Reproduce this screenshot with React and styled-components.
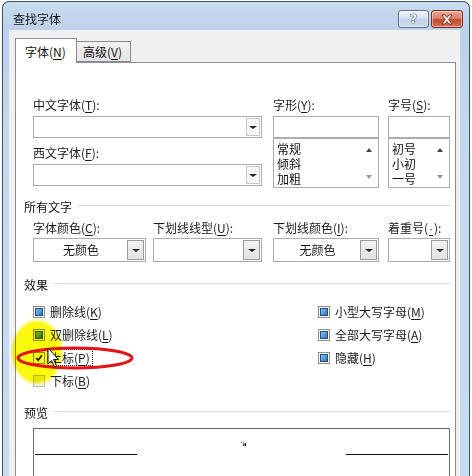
import React from 'react'
import styled, { createGlobalStyle } from 'styled-components'

const Global = createGlobalStyle`
  html, body {
    margin: 0;
    padding: 0;
    background: #fff;
  }
  body {
    font-family: "Noto Sans CJK SC", "Microsoft YaHei", sans-serif;
    font-size: 12px;
    color: #1b1b1b;
  }
  u {
    text-decoration-thickness: 1px;
    text-underline-offset: 2px;
  }
`;

const Screen = styled.div`
    position: relative;
    width: 472px;
    height: 476px;
    overflow: hidden;
    background: #fff;
    padding: 1px 0 0 2px;
    box-sizing: border-box;
`;

const Window = styled.div`
    width: 468px;
    height: 520px;
    box-sizing: border-box;
    border: 1px solid #3c5068;
    border-bottom: none;
    border-radius: 7px 7px 0 0;
    background: linear-gradient(to bottom, #c9dbef 0px, #bcd1ea 28px, #c3d7ee 120px, #c9dcf1 100%);
    display: flex;
    flex-direction: column;
`;

const TitleBar = styled.div`
    height: 28px;
    display: flex;
    align-items: flex-start;
    padding: 0 6px 0 10px;
    flex-shrink: 0;
`;

const Title = styled.div`
    flex: 1;
    line-height: 16px;
    margin-top: 9px;
    color: #111;
`;

const CapButton = styled.div`
    margin-top: 8px;
    margin-left: ${p => p.$ml || 0}px;
    width: ${p => p.$w}px;
    height: 18px;
    box-sizing: border-box;
    border: 1px solid ${p => (p.$close ? '#7b2a1c' : '#5c7089')};
    border-radius: 3px;
    background: ${p => (p.$close
        ? 'linear-gradient(to bottom, #e9ab9d 0%, #d98068 45%, #c5472b 55%, #d2735b 100%)'
        : 'linear-gradient(to bottom, #eef3f9 0%, #d6e1ee 45%, #c1d1e5 55%, #cddbec 100%)')};
    box-shadow: inset 0 0 0 1px rgba(255, 255, 255, 0.45);
    display: flex;
    align-items: center;
    justify-content: center;
`;

const HelpGlyph = styled.span`
    font-family: "DejaVu Sans", sans-serif;
    font-weight: bold;
    font-size: 13px;
    line-height: 14px;
    color: #f4f7fb;
    text-shadow: 0 0 1px #34475f, 0 0 1px #34475f, 0 0 1px #34475f;
`;

const Body = styled.div`
    flex: 1;
    margin: 0 9px 0 6px;
    background: #f0f0f0;
    padding: 8px 4px 0 6px;
    display: flex;
    flex-direction: column;
`;

const TabRow = styled.div`
    display: flex;
    align-items: flex-end;
    height: 24px;
    position: relative;
    z-index: 1;
`;

const Tab = styled.div`
    box-sizing: border-box;
    width: ${p => p.$w}px;
    height: ${p => (p.$active ? 25 : 21)}px;
    margin-left: ${p => (p.$active ? 0 : -1)}px;
    margin-bottom: ${p => (p.$active ? -1 : 0)}px;
    border: 1px solid #898c95;
    border-bottom: ${p => (p.$active ? 'none' : '1px solid #898c95')};
    background: ${p => (p.$active ? '#fff' : 'linear-gradient(to bottom, #f3f3f3, #e3e3e3)')};
    padding: ${p => (p.$active ? '5px 0 0 9px' : '2px 0 0 6px')};
    line-height: 16px;
    color: #111;
`;

const Panel = styled.div`
    flex: 1;
    border: 1px solid #898c95;
    background: #fff;
    padding: 34px 0 0 8px;
`;

const Row = styled.div`
    display: flex;
    align-items: flex-start;
    margin-left: 9px;
    margin-top: ${p => p.$mt || 0}px;
`;

const Col = styled.div`
    display: flex;
    flex-direction: column;
    width: ${p => p.$w}px;
    margin-left: ${p => p.$ml || 0}px;
    flex-shrink: 0;
`;

const Label = styled.div`
    line-height: 16px;
    height: 16px;
    white-space: nowrap;
    margin-top: ${p => p.$mt || 0}px;
    margin-bottom: ${p => p.$mb || 3}px;
`;

const Dot = styled.u`
    font-family: "Liberation Sans", sans-serif;
    padding: 0 1px;
`;

const Combo = styled.div`
    box-sizing: border-box;
    height: ${p => p.$h}px;
    border: 1px solid #abadb3;
    background: #fff;
    display: flex;
    align-items: stretch;
    padding: 1px;
`;

const ComboText = styled.div`
    flex: 1;
    text-align: center;
    line-height: ${p => p.$h - 4}px;
`;

const DropBtn = styled.div`
    box-sizing: border-box;
    width: ${p => p.$w}px;
    margin-left: auto;
    border: 1px solid ${p => p.$dark ? '#9c9c9c' : '#c8c8c8'};
    background: ${p => p.$dark ? 'linear-gradient(to bottom, #f2f2f2, #e2e2e2)' : '#f7f7f7'};
    display: flex;
    align-items: center;
    justify-content: center;
`;

const Arrow = styled.span`
    width: 0;
    height: 0;
    border-left: ${p => p.$size || 4}px solid transparent;
    border-right: ${p => p.$size || 4}px solid transparent;
    ${p => p.$up
        ? `border-bottom: ${p.$h || 3}px solid ${p.$color || '#222'};`
        : `border-top: ${p.$h || 3}px solid ${p.$color || '#222'};`}
`;

const TextBox = styled.div`
    box-sizing: border-box;
    height: 22px;
    border: 1px solid #abadb3;
    background: #fff;
`;

const ListBox = styled.div`
    box-sizing: border-box;
    height: 50px;
    border: 1px solid #abadb3;
    background: #fff;
    display: flex;
`;

const Items = styled.div`
    flex: 1;
    padding: 2px 0 0 3px;
    line-height: 15px;
    color: #111;
`;

const ScrollCol = styled.div`
    width: 18px;
    display: flex;
    flex-direction: column;
    align-items: center;
    justify-content: space-between;
    padding: 9px 0 8px;
`;

const Heading = styled.div`
    display: flex;
    align-items: center;
    height: 16px;
    line-height: 16px;
    margin-top: ${p => p.$mt}px;
    margin-right: 4px;
    color: #111;
`;

const Rule = styled.div`
    flex: 1;
    height: 1px;
    background: #d5dde6;
    margin: 0 0 3px ${p => p.$ml || 5}px;
`;

const Checks = styled.div`
    display: flex;
    margin: 7px 0 0 9px;
`;

const CheckCol = styled.div`
    width: ${p => p.$w || 'auto'};
    display: flex;
    flex-direction: column;
`;

const CheckRow = styled.div`
    height: 23px;
    display: flex;
    align-items: center;
`;

const Box = styled.div`
    box-sizing: border-box;
    width: 12px;
    height: 12px;
    border: 1px solid ${p => p.$state === 'none' ? '#bdbdbd' : '#8e8f8f'};
    background: ${p => p.$state === 'none' ? 'linear-gradient(135deg, #e4e4e4, #fbfbfb)' : '#fff'};
    padding: 1px;
    display: flex;
    align-items: center;
    justify-content: center;
    margin-right: 2px;
`;

const Fill = styled.div`
    box-sizing: border-box;
    width: 8px;
    height: 8px;
    border: 1px solid #1d4f82;
    background: linear-gradient(135deg, #8cc4ee, #2d70b4);
`;

const CheckText = styled.span`
    line-height: 15px;
    padding: 0 2px;
    border: 1px dotted ${p => (p.$focus ? '#222' : 'transparent')};
    white-space: nowrap;
`;

const PreviewBox = styled.div`
    box-sizing: border-box;
    margin: 7px 5px 0 9px;
    height: 70px;
    border: 1px solid #6e6e6e;
    padding: 0 1px;
    display: flex;
    align-items: flex-start;
`;

const BaseLine = styled.div`
    width: 102px;
    height: 1px;
    background: #111;
    margin-top: 25px;
`;

const Sample = styled.div`
    flex: 1;
    text-align: center;
    font-family: "DejaVu Sans", sans-serif;
    font-weight: bold;
    font-size: 6px;
    line-height: 6px;
    margin-top: 12px;
    padding-left: 4px;
`;

const Overlay = styled.svg`
    position: absolute;
    left: 0;
    top: 0;
    pointer-events: none;
    mix-blend-mode: ${p => p.$blend || 'normal'};
`;

function Check({ state, children, focus }) {
    return (
        <CheckRow>
            <Box $state={state}>
                {state === 'mixed' && <Fill />}
                {state === 'checked' && (
                    <svg width="10" height="10" viewBox="0 0 10 10">
                        <path d="M1.5 5 L4 7.8 L8.6 1.6" fill="none" stroke="#111" strokeWidth="2" />
                    </svg>
                )}
            </Box>
            <CheckText $focus={focus}>{children}</CheckText>
        </CheckRow>
    )
}

function FontCombo() {
    return (
        <Combo $h={22}>
            <DropBtn $w={14}><Arrow /></DropBtn>
        </Combo>
    )
}

function ColorCombo({ text, btn = 17 }) {
    return (
        <Combo $h={24}>
            <ComboText $h={24}>{text}</ComboText>
            <DropBtn $w={btn} $dark><Arrow /></DropBtn>
        </Combo>
    )
}

function List({ items }) {
    return (
        <ListBox>
            <Items>
                {items.map(i => <div key={i}>{i}</div>)}
            </Items>
            <ScrollCol>
                <Arrow $up $size={3} $h={4} $color="#444" />
                <Arrow $size={3} $h={4} $color="#9a9a9a" />
            </ScrollCol>
        </ListBox>
    )
}

export default function App() {
    return (
        <Screen>
            <Global />
            <Window>
                <TitleBar>
                    <Title>查找字体</Title>
                    <CapButton $w={31}><HelpGlyph>?</HelpGlyph></CapButton>
                    <CapButton $w={32} $ml={2} $close>
                        <svg width="14" height="11" viewBox="0 0 14 11">
                            <path d="M2 1 L5 1 L7 3.5 L9 1 L12 1 L8.6 5.5 L12 10 L9 10 L7 7.5 L5 10 L2 10 L5.4 5.5 Z"
                                fill="#fff" stroke="#5a1a10" strokeWidth="0.8" />
                        </svg>
                    </CapButton>
                </TitleBar>
                <Body>
                    <TabRow>
                        <Tab $active $w={62}>字体(<u>N</u>)</Tab>
                        <Tab $w={55}>高级(<u>V</u>)</Tab>
                    </TabRow>
                    <Panel>
                        <Row>
                            <Col $w={229}>
                                <Label>中文字体(<u>T</u>):</Label>
                                <FontCombo />
                                <Label $mt={7}>西文字体(<u>F</u>):</Label>
                                <FontCombo />
                            </Col>
                            <Col $w={106} $ml={11}>
                                <Label>字形(<u>Y</u>):</Label>
                                <TextBox />
                                <List items={['常规', '倾斜', '加粗']} />
                            </Col>
                            <Col $w={62} $ml={9}>
                                <Label>字号(<u>S</u>):</Label>
                                <TextBox />
                                <List items={['初号', '小初', '一号']} />
                            </Col>
                        </Row>

                        <Heading $mt={11}>所有文字<Rule $ml={6} /></Heading>
                        <Row $mt={5}>
                            <Col $w={113}>
                                <Label $mb={2}>字体颜色(<u>C</u>):</Label>
                                <ColorCombo text="无颜色" />
                            </Col>
                            <Col $w={109} $ml={7}>
                                <Label $mb={2}>下划线线型(<u>U</u>):</Label>
                                <ColorCombo text="" />
                            </Col>
                            <Col $w={106} $ml={11}>
                                <Label $mb={2}>下划线颜色(<u>I</u>):</Label>
                                <ColorCombo text="无颜色" />
                            </Col>
                            <Col $w={62} $ml={9}>
                                <Label $mb={2}>着重号(<Dot>·</Dot>):</Label>
                                <ColorCombo text="" />
                            </Col>
                        </Row>

                        <Heading $mt={15}>效果<Rule /></Heading>
                        <Checks>
                            <CheckCol $w="285px">
                                <Check state="mixed">删除线(<u>K</u>)</Check>
                                <Check state="mixed">双删除线(<u>L</u>)</Check>
                                <Check state="checked" focus>上标(<u>P</u>)</Check>
                                <Check state="none">下标(<u>B</u>)</Check>
                            </CheckCol>
                            <CheckCol>
                                <Check state="mixed">小型大写字母(<u>M</u>)</Check>
                                <Check state="mixed">全部大写字母(<u>A</u>)</Check>
                                <Check state="mixed">隐藏(<u>H</u>)</Check>
                            </CheckCol>
                        </Checks>

                        <Heading $mt={13}>预览<Rule /></Heading>
                        <PreviewBox>
                            <BaseLine />
                            <Sample>ˈa</Sample>
                            <BaseLine />
                        </PreviewBox>
                    </Panel>
                </Body>
            </Window>

            <Overlay width="472" height="476" $blend="multiply">
                <defs>
                    <radialGradient id="hl">
                        <stop offset="0" stopColor="#ffff00" />
                        <stop offset="0.85" stopColor="#fbf812" />
                        <stop offset="1" stopColor="#fbf812" stopOpacity="0" />
                    </radialGradient>
                </defs>
                <ellipse cx="37" cy="352" rx="27" ry="34" fill="url(#hl)" />
            </Overlay>
            <Overlay width="472" height="476">
                <ellipse cx="75" cy="358" rx="57" ry="10" fill="none" stroke="#e5121b" strokeWidth="3" />
                <path d="M48 348 L48 364 L51.5 360.5 L54.5 367 L56.5 366 L53.5 359.5 L58.5 359.5 Z"
                    fill="#fff" stroke="#111" strokeWidth="1" strokeLinejoin="round" />
            </Overlay>
        </Screen>
    )
}
